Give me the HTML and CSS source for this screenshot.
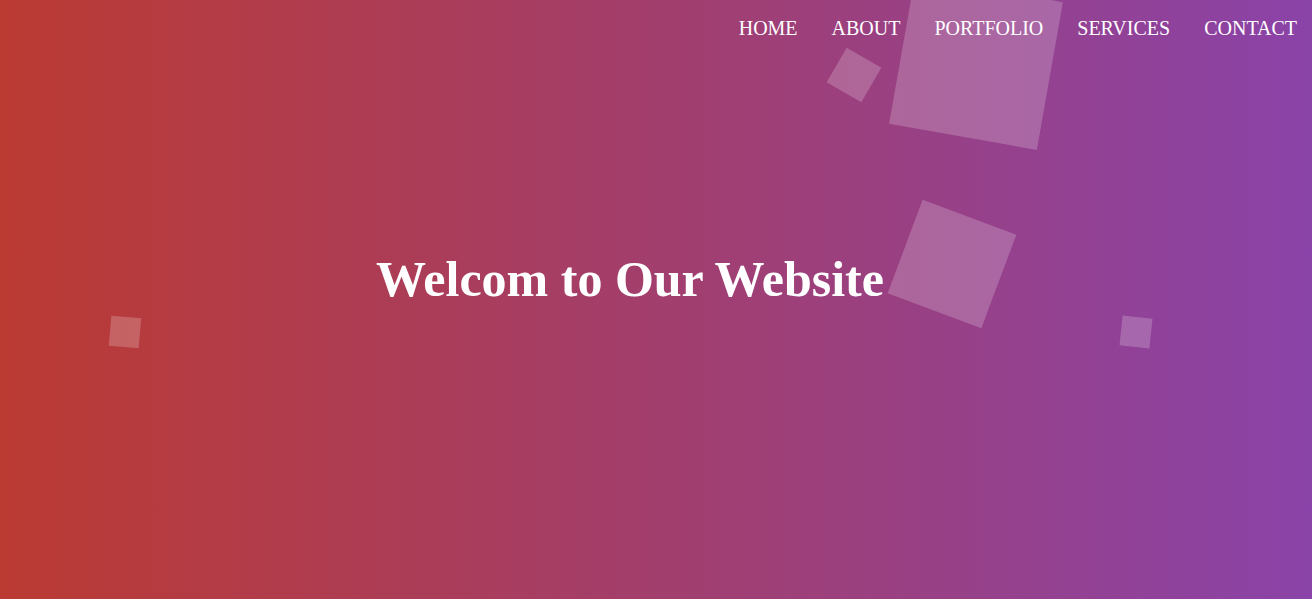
FILE: index.html
```html
<!DOCTYPE html>
<html lang="en">
<head>
<meta charset="utf-8">
<title>Welcome</title>
<link rel="stylesheet" href="styles.css">
</head>
<body>
<section class="hero">
  <ul class="squares" aria-hidden="true">
    <li class="sq sq-1"></li>
    <li class="sq sq-2"></li>
    <li class="sq sq-3"></li>
    <li class="sq sq-4"></li>
    <li class="sq sq-5"></li>
  </ul>
  <header class="topbar">
    <nav>
      <ul class="menu">
        <li><a href="#">HOME</a></li>
        <li><a href="#">ABOUT</a></li>
        <li><a href="#">PORTFOLIO</a></li>
        <li><a href="#">SERVICES</a></li>
        <li><a href="#">CONTACT</a></li>
      </ul>
    </nav>
  </header>
  <div class="hero-body">
    <h1 class="title">Welcom to Our Website</h1>
  </div>
</section>
</body>
</html>
```
FILE: styles.css
```css
* { box-sizing: border-box; }
html, body { margin: 0; padding: 0; height: 100%; }
body {
  font-family: "Liberation Serif", "Times New Roman", serif;
  color: #fff;
  overflow: hidden;
}
.hero {
  position: relative;
  height: 599px;
  display: flex;
  flex-direction: column;
  background: linear-gradient(to right, #bb3a32, #8a43a8);
  overflow: hidden;
}
.squares {
  list-style: none;
  margin: 0;
  padding: 0;
}
.sq {
  position: absolute;
  background: rgba(255, 255, 255, 0.2);
}
.sq-1 { width: 150px; height: 150px; left: 901px; top: -12px; transform: rotate(10deg); }
.sq-2 { width: 40px; height: 40px; left: 834px; top: 55px; transform: rotate(30deg); }
.sq-3 { width: 100px; height: 100px; left: 902px; top: 214px; transform: rotate(20.5deg); }
.sq-4 { width: 30px; height: 30px; left: 110px; top: 317px; transform: rotate(5deg); }
.sq-5 { width: 30px; height: 30px; left: 1121px; top: 317px; transform: rotate(6deg); }

.topbar {
  position: relative;
  z-index: 1;
  display: flex;
  justify-content: flex-end;
  padding: 17px 15px 0 0;
}
.menu {
  list-style: none;
  margin: 0;
  padding: 0;
  display: flex;
  gap: 34px;
}
.menu a {
  color: #fff;
  text-decoration: none;
  font-size: 20px;
  line-height: 23px;
}
.hero-body {
  position: relative;
  z-index: 1;
  flex: 1;
  display: flex;
  align-items: center;
  justify-content: center;
  padding: 0 52px 80px 0;
}
.title {
  margin: 0;
  font-size: 50px;
  font-weight: bold;
  line-height: 1.15;
}
```
